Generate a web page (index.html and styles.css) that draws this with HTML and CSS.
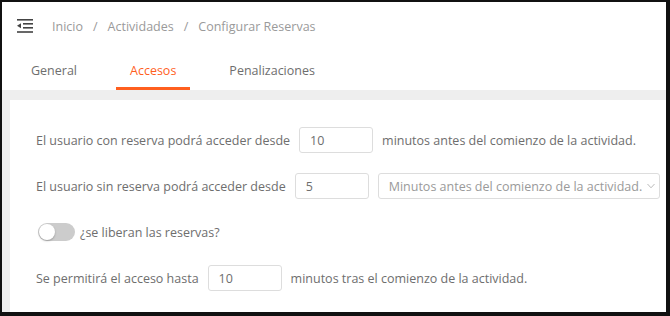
FILE: index.html
```html
<!DOCTYPE html>
<html lang="es">
<head>
    <meta charset="UTF-8">
    <title>Configurar Reservas</title>
    <link rel="stylesheet" href="styles.css">
</head>
<body>
    <div class="frame">
        <header class="topbar">
            <svg class="menu-icon" width="16" height="14" viewBox="0 0 16 14">
                <rect x="0" y="0" width="16" height="1.6" fill="#444"/>
                <rect x="6" y="4" width="10" height="1.6" fill="#444"/>
                <rect x="6" y="8" width="10" height="1.6" fill="#444"/>
                <rect x="0" y="12.2" width="16" height="1.6" fill="#444"/>
                <path d="M0 6.8 L4 4.3 L4 9.3 Z" fill="#444"/>
            </svg>
            <nav class="crumbs">
                <span>Inicio</span><span class="sep">/</span><span>Actividades</span><span class="sep">/</span><span>Configurar Reservas</span>
            </nav>
        </header>

        <div class="tabs">
            <div class="tab">General</div>
            <div class="tab active">Accesos</div>
            <div class="tab">Penalizaciones</div>
        </div>

        <div class="content">
            <div class="card">
                <div class="row">
                    <span class="label">El usuario con reserva podrá acceder desde</span>
                    <input class="num" type="text" value="10">
                    <span class="label">minutos antes del comienzo de la actividad.</span>
                </div>
                <div class="row">
                    <span class="label">El usuario sin reserva podrá acceder desde</span>
                    <input class="num" type="text" value="5">
                    <div class="select">
                        <span>Minutos antes del comienzo de la actividad.</span>
                        <svg width="8" height="6" viewBox="0 0 8 6"><path d="M0.5 1 L4 4.8 L7.5 1" fill="none" stroke="#bbb" stroke-width="1"/></svg>
                    </div>
                </div>
                <div class="row">
                    <div class="switch"><div class="knob"></div></div>
                    <span class="label">¿se liberan las reservas?</span>
                </div>
                <div class="row">
                    <span class="label">Se permitirá el acceso hasta</span>
                    <input class="num" type="text" value="10">
                    <span class="label">minutos tras el comienzo de la actividad.</span>
                </div>
            </div>
        </div>
    </div>
</body>
</html>
```

FILE: styles.css
```css
:root {
    --orange: #ff5f1f;
    --text: #6e6e6e;
    --light: #9a9a9a;
    --line: #ddd;
    --band: #eee;
}

* {
    margin: 0;
    padding: 0;
    box-sizing: border-box;
    font-family: 'Open Sans', 'DejaVu Sans', sans-serif;
}

body {
    background: #fff;
}

.frame {
    width: 670px;
    height: 316px;
    border-style: solid;
    border-color: #111;
    border-width: 2px 4px 4px 2px;
    display: flex;
    flex-direction: column;
    overflow: hidden;
}

/* Cabecera */
.topbar {
    height: 48px;
    display: flex;
    align-items: center;
    padding-left: 15px;
}

.menu-icon {
    margin-right: 19px;
}

.crumbs {
    font-size: 12.5px;
    color: var(--light);
}

.crumbs .sep {
    margin: 0 10px;
}

/* Pestañas */
.tabs {
    height: 40px;
    display: flex;
    padding-left: 15px;
}

.tab {
    padding: 4px 14px 0;
    font-size: 12.5px;
    color: var(--text);
    display: flex;
    align-items: center;
    margin-right: 25px;
    border-bottom: 3px solid transparent;
}

.tab.active {
    color: var(--orange);
    border-bottom-color: var(--orange);
}

/* Contenido */
.content {
    flex: 1;
    background: var(--band);
    padding: 10px 0 0 8px;
    display: flex;
}

.card {
    flex: 1;
    background: #fff;
    padding: 27px 0 0 26px;
}

.row {
    display: flex;
    align-items: center;
    height: 26px;
    margin-bottom: 20px;
}

.label {
    font-size: 12.5px;
    color: var(--text);
    white-space: nowrap;
}

.num {
    width: 74px;
    height: 26px;
    margin: 0 9px;
    border: 1px solid var(--line);
    border-radius: 3px;
    padding-left: 10px;
    font-size: 12.5px;
    color: var(--text);
    outline: none;
}

.select {
    width: 282px;
    height: 26px;
    border: 1px solid var(--line);
    border-radius: 3px;
    display: flex;
    align-items: center;
    justify-content: space-between;
    padding: 0 4px 0 10px;
    font-size: 12.5px;
    color: var(--light);
    white-space: nowrap;
}

.switch {
    width: 37px;
    height: 18px;
    border-radius: 9px;
    background: #ccc;
    margin: 0 5px 0 2px;
    position: relative;
}

.knob {
    position: absolute;
    top: 1px;
    left: 1px;
    width: 16px;
    height: 16px;
    border-radius: 50%;
    background: #fff;
    box-shadow: 0 1px 2px rgba(0,0,0,0.25);
}
```
